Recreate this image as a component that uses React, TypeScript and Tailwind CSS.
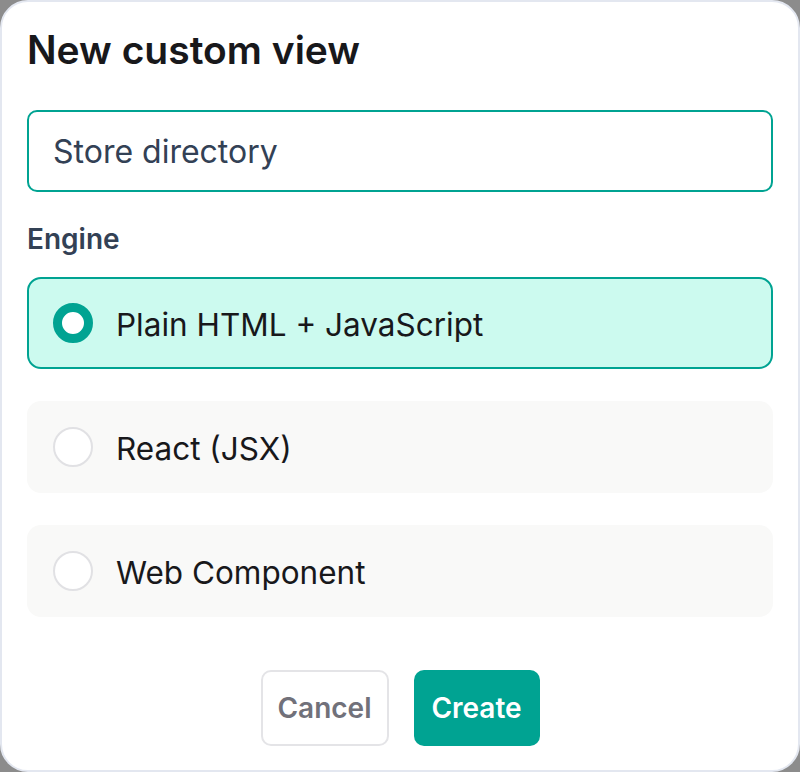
import { useState } from 'react'

const engines = [
  { id: 'html', label: 'Plain HTML + JavaScript' },
  { id: 'react', label: 'React (JSX)' },
  { id: 'wc', label: 'Web Component' },
]

export default function App() {
  const [name, setName] = useState('Store directory')
  const [engine, setEngine] = useState('html')

  return (
    <div className="w-[800px] h-[772px] bg-[#8c8c8c] font-['Inter',sans-serif]">
      <div className="h-full flex flex-col rounded-[28px] border-2 border-[#e3e7f0] bg-white px-[25px] pt-[26px]">
        {/* Header */}
        <h1 className="text-[39px] leading-[44px] font-semibold text-[#18181b]">New custom view</h1>

        {/* Name field */}
        <input
          value={name}
          onChange={(e) => setName(e.target.value)}
          className="mt-[38px] h-[82px] w-full rounded-[10px] border-2 border-[#00a392] px-[24px] text-[32px] text-[#334155] outline-none"
        />

        {/* Engine picker */}
        <div className="mt-[30px] text-[28px] leading-[34px] font-semibold text-[#334155]">Engine</div>
        <div className="mt-[21px] flex flex-col gap-[32px]">
          {engines.map((opt) => {
            const active = opt.id === engine
            return (
              <button
                key={opt.id}
                onClick={() => setEngine(opt.id)}
                className={
                  active
                    ? 'h-[92px] flex items-center gap-[23px] rounded-[14px] border-2 border-[#00a392] bg-[#ccfaef] px-[24px] text-left'
                    : 'h-[92px] flex items-center gap-[23px] rounded-[14px] border-2 border-transparent bg-[#f9f9f8] px-[24px] text-left'
                }
              >
                {active ? (
                  <span className="w-[40px] h-[40px] rounded-full border-[9px] border-[#00a392] bg-white" />
                ) : (
                  <span className="w-[40px] h-[40px] rounded-full border-2 border-[#e1e1e4] bg-white" />
                )}
                <span className="pt-[3px] text-[31.5px] text-[#18181b]">{opt.label}</span>
              </button>
            )
          })}
        </div>

        {/* Actions */}
        <div className="mt-[53px] flex justify-center gap-[25px]">
          <button className="h-[76px] w-[128px] rounded-[10px] border-2 border-[#e4e4e7] bg-white text-[28px] font-semibold text-[#71717a]">
            Cancel
          </button>
          <button className="h-[76px] w-[126px] rounded-[10px] bg-[#00a392] text-[28px] font-semibold text-white">
            Create
          </button>
        </div>
      </div>
    </div>
  )
}
